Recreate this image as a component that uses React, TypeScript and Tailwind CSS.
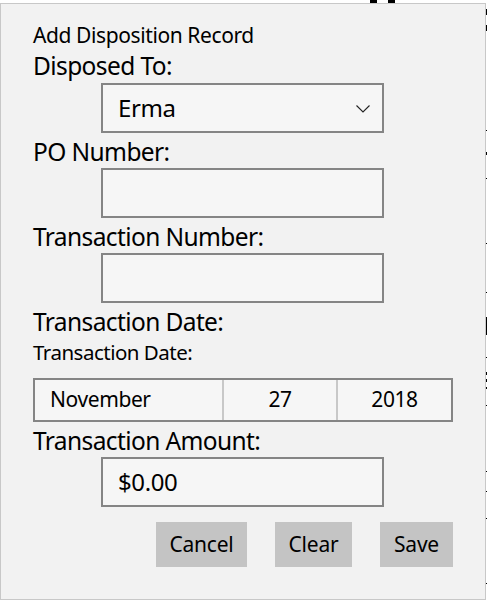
import React from "react";

const font = { fontFamily: '"Noto Sans", "Open Sans", sans-serif' };

function Label({ children }: { children: React.ReactNode }) {
  return (
    <div className="h-[35px] pt-[2px] text-[24.5px] leading-[34px] tracking-[-0.6px] text-black whitespace-nowrap">
      {children}
    </div>
  );
}

function Box({ children }: { children?: React.ReactNode }) {
  return (
    <div className="ml-[68px] w-[283px] h-[50px] border-2 border-[#858585] bg-[#f6f6f6] flex items-center pl-[15px] pr-[12px] text-[24px] tracking-[-0.4px] text-black">
      {children}
    </div>
  );
}

function Frag({ cls }: { cls: string }) {
  return <div className={"absolute bg-black " + cls} />;
}

export default function App() {
  return (
    <div className="relative w-[487px] h-[600px] bg-white overflow-hidden" style={font}>
      {/* background content peeking out */}
      <Frag cls="left-[370px] top-0 w-[7px] h-[3px]" />
      <Frag cls="left-[388px] top-0 w-[7px] h-[3px]" />
      <Frag cls="left-[486px] top-[9px] w-[1px] h-[6px]" />
      <Frag cls="left-[486px] top-[25px] w-[1px] h-[6px]" />
      <Frag cls="left-[486px] top-[130px] w-[1px] h-[1px]" />
      <Frag cls="left-[486px] top-[152px] w-[1px] h-[3px]" />
      <Frag cls="left-[486px] top-[178px] w-[1px] h-[1px]" />
      <Frag cls="left-[486px] top-[243px] w-[1px] h-[1px]" />
      <Frag cls="left-[486px] top-[292px] w-[1px] h-[1px]" />
      <Frag cls="left-[486px] top-[317px] w-[1px] h-[18px]" />
      <Frag cls="left-[486px] top-[357px] w-[1px] h-[1px]" />
      <Frag cls="left-[486px] top-[372px] w-[1px] h-[3px]" />
      <Frag cls="left-[486px] top-[379px] w-[1px] h-[3px]" />
      <Frag cls="left-[486px] top-[387px] w-[1px] h-[2px]" />
      <Frag cls="left-[486px] top-[405px] w-[1px] h-[1px]" />
      <Frag cls="left-[486px] top-[471px] w-[1px] h-[1px]" />
      <Frag cls="left-[486px] top-[491px] w-[1px] h-[1px]" />
      <Frag cls="left-[486px] top-[518px] w-[1px] h-[1px]" />
      <Frag cls="left-[486px] top-[583px] w-[1px] h-[1px]" />

      <div className="mt-[3px] w-[486px] h-[597px] border border-[#c8c8c8] bg-[#f2f2f2] pl-[32px] pt-[17px] flex flex-col">
        <div className="h-[28px] text-[21px] leading-[28px] tracking-[-0.4px] text-black whitespace-nowrap">
          Add Disposition Record
        </div>
        <div className="h-[34px] text-[24.5px] leading-[34px] tracking-[-0.6px] text-black whitespace-nowrap">
          Disposed To:
        </div>
        <Box>
          <span className="flex-1">Erma</span>
          <svg width="14" height="8" viewBox="0 0 14 8" className="mt-[1px]">
            <path d="M0.5 0.5 L7 7 L13.5 0.5" fill="none" stroke="#222" strokeWidth="1.1" />
          </svg>
        </Box>
        <Label>PO Number:</Label>
        <Box />
        <Label>Transaction Number:</Label>
        <Box />
        <Label>Transaction Date:</Label>
        <div className="h-[40px] text-[20.5px] leading-[28px] tracking-[-0.5px] text-black whitespace-nowrap">
          Transaction Date:
        </div>
        <div className="w-[420px] h-[44px] border-2 border-[#858585] bg-[#f6f6f6] flex text-[21px] tracking-[-0.4px] text-black">
          <div className="w-[189px] flex items-center pl-[15px] border-r-2 border-[#c8c8c8]">November</div>
          <div className="w-[114px] flex items-center justify-center border-r-2 border-[#c8c8c8]">27</div>
          <div className="flex-1 flex items-center justify-center">2018</div>
        </div>
        <Label>Transaction Amount:</Label>
        <Box>$0.00</Box>
        <div className="w-[420px] mt-[15px] flex justify-end gap-[28px] text-[21px] tracking-[-0.2px] text-black">
          <div className="w-[91px] h-[45px] bg-[#c4c4c4] flex items-center justify-center">Cancel</div>
          <div className="w-[77px] h-[45px] bg-[#c4c4c4] flex items-center justify-center">Clear</div>
          <div className="w-[73px] h-[45px] bg-[#c4c4c4] flex items-center justify-center">Save</div>
        </div>
      </div>
    </div>
  );
}
